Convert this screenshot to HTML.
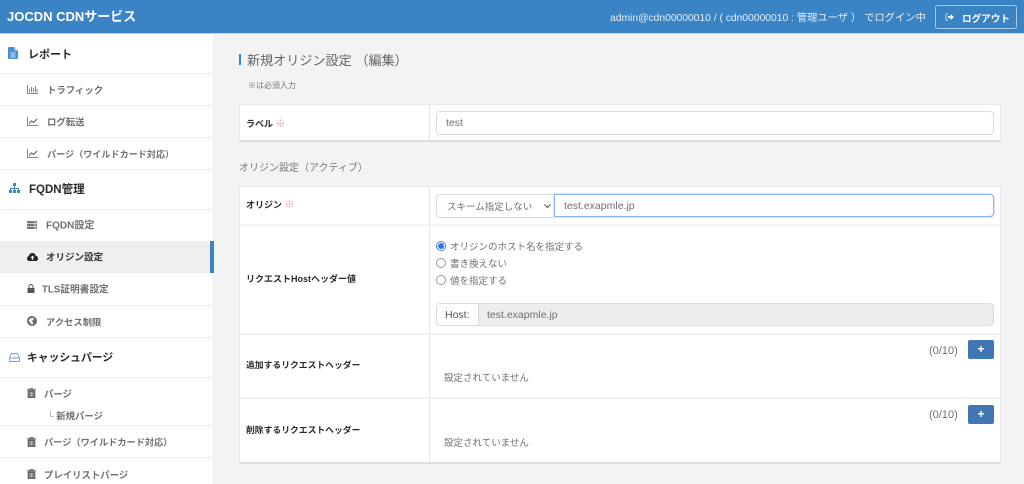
<!DOCTYPE html>
<html lang="ja"><head><meta charset="utf-8"><title>JOCDN</title>
<style>
*{box-sizing:border-box}
html,body{margin:0;padding:0}
body{width:1024px;height:484px;overflow:hidden;position:relative;background:#f3f3f3;font-family:"Liberation Sans","Noto Sans CJK JP",sans-serif;color:#555}
.a{position:absolute;white-space:nowrap}
.t{position:absolute;white-space:nowrap;line-height:14px;height:14px}
#hd{left:0;top:0;width:1024px;height:34px;background:#3a83c5;border-bottom:1px solid #c4d0da}
#sb{left:0;top:34px;width:214px;height:450px;background:#fff;border-right:1px solid #ececec}
.ln{position:absolute;left:0;width:214px;height:1px;background:#ebebeb}
.h{font-size:11px;font-weight:bold;color:#2a2a2a}
.s{font-size:9.4px;font-weight:bold;color:#707070;transform:translateY(-.5px)}
svg{position:absolute;display:block}
.card{position:absolute;left:239px;width:762px;background:#fff;border:1px solid #e8e8e8;border-bottom:2px solid #dcdcdc}
.vl{position:absolute;left:429px;width:1px;background:#e4e4e4}
.hl{position:absolute;left:240px;width:760px;height:2px;background:#f2f2f2}
.lb{font-size:9px;font-weight:bold;color:#2a2a2a}
.req{color:#ee8f99;font-weight:normal;font-size:10px}
.box{position:absolute;background:#fff;border:1px solid #dcdcdc;border-radius:4px;font-size:10.5px;color:#707070;line-height:22px;padding-left:9px;white-space:nowrap}
.tx{font-size:9.5px;color:#707070}
.radio{position:absolute;width:10px;height:10px;border-radius:50%;border:1px solid #999;background:#fff}
.btn{position:absolute;left:968px;width:26px;height:19px;background:#4177b3;border-radius:2px;color:#fff;font-weight:bold;font-size:12px;line-height:18px;text-align:center}
</style></head><body>
<div class="a" id="hd"></div>
<div class="t" style="left:7px;top:10px;font-size:13px;font-weight:bold;color:#fff">JOCDN CDNサービス</div>
<div class="t" style="left:610px;top:12px;font-size:10.3px;color:#e4eef8">admin@cdn00000010 / ( cdn00000010 : 管理ユーザ ） でログイン中</div>
<div class="a" style="left:935px;top:5px;width:82px;height:24px;border:1px solid #a9cbe8;border-radius:3px"></div>
<svg style="left:945px;top:13px" width="9" height="8" viewBox="0 0 9 8"><path d="M3 1H1v6h2" fill="none" stroke="#b8d4ec" stroke-width="1"/><path d="M3 3h2.500V1L9 4 5.500 7V5H3z" fill="#fff"/></svg>
<div class="t" style="left:962px;top:13px;font-size:9.6px;font-weight:bold;color:#fff">ログアウト</div>

<div class="a" id="sb"></div>
<div class="ln" style="top:73px"></div>
<div class="ln" style="top:105px"></div>
<div class="ln" style="top:137px"></div>
<div class="ln" style="top:169px"></div>
<div class="ln" style="top:209px"></div>
<div class="a" style="left:0;top:241px;width:214px;height:32px;background:#efefef"></div>
<div class="a" style="left:210px;top:241px;width:4px;height:32px;background:#3a83c5"></div>
<div class="ln" style="top:305px"></div>
<div class="ln" style="top:337px"></div>
<div class="ln" style="top:377px"></div>
<div class="ln" style="top:425px"></div>
<div class="ln" style="top:457px"></div>

<svg style="left:8px;top:47px" width="11" height="12" viewBox="0 0 11 12"><path d="M0 1q0-1 1-1h5l4 4v7q0 1-1 1H1q-1 0-1-1z" fill="#4a8fd0"/><path d="M6.500 0v3.500H10" fill="#bcd8f0"/><path d="M2.500 6h5M2.500 8h5M2.500 10h5" stroke="#fff" stroke-width=".8"/></svg>
<div class="t h" style="left:28px;top:48px">レポート</div>
<svg style="left:27px;top:85px" width="11" height="9" viewBox="0 0 11 9"><path d="M.5 0v8.500H11" fill="none" stroke="#888"/><path d="M2.500 4v3.500M4.500 2v5.500M6.500 3v4.500M8.500 1v6.500M10 4v3.500" stroke="#888" stroke-width="1"/></svg>
<div class="t s" style="left:47px;top:84px">トラフィック</div>
<svg style="left:27px;top:117px" width="11" height="9" viewBox="0 0 11 9"><path d="M.5 0v8.500H11" fill="none" stroke="#888"/><path d="M2 6.500L4.500 4 6.500 5.500 10 2" fill="none" stroke="#666" stroke-width="1.200"/></svg>
<div class="t s" style="left:47px;top:116px">ログ転送</div>
<svg style="left:27px;top:149px" width="11" height="9" viewBox="0 0 11 9"><path d="M.5 0v8.500H11" fill="none" stroke="#888"/><path d="M2 6.500L4.500 4 6.500 5.500 10 2" fill="none" stroke="#666" stroke-width="1.200"/></svg>
<div class="t s" style="left:47px;top:148px;font-size:9.1px">パージ（ワイルドカード対応）</div>

<svg style="left:9px;top:183px" width="11" height="10" viewBox="0 0 11 10"><path d="M4 0h3v3H4zM0 7h3v3H0zM4 7h3v3H4zM8 7h3v3H8z" fill="#3f86c8"/><path d="M5.500 3v2.500M1.500 7V5.500h8V7M5.500 5v2" fill="none" stroke="#3f86c8"/></svg>
<div class="t h" style="left:29px;top:183px;font-size:11.500px">FQDN管理</div>
<svg style="left:27px;top:221px" width="10" height="8" viewBox="0 0 10 8"><path d="M0 0h10v2.200H0zM0 2.900h10v2.200H0zM0 5.800h10V8H0z" fill="#777"/><path d="M7 1.100h2M7 4h2M7 6.900h2" stroke="#fff" stroke-width=".7"/></svg>
<div class="t s" style="left:46px;top:220px;font-size:10px">FQDN設定</div>
<svg style="left:27px;top:253px" width="11" height="8" viewBox="0 0 11 8"><path d="M2.500 8Q0 8 0 5.500 0 3.700 1.800 3.300 2.400 0 5.500 0 8 0 8.700 2.800 11 3.200 11 5.500 11 8 8.500 8z" fill="#222"/><path d="M5.500 2.500L3.500 4.800h1.300v2h1.400v-2h1.300z" fill="#fff"/></svg>
<div class="t s" style="left:46px;top:252px;color:#333;font-size:9.500px">オリジン設定</div>
<svg style="left:27px;top:284px" width="8" height="9" viewBox="0 0 8 9"><path d="M2 4V2.500a2 2 0 0 1 4 0V4" fill="none" stroke="#555" stroke-width="1"/><path d="M.5 4h7v5h-7z" fill="#555"/></svg>
<div class="t s" style="left:42px;top:284px;font-size:9.700px">TLS証明書設定</div>
<svg style="left:27px;top:316px" width="10" height="10" viewBox="0 0 10 10"><circle cx="5" cy="5" r="5" fill="#666"/><path d="M3 2.500L6 1.500 7 3 5 5 6.500 7 5 9 3 6.500 1.500 5z" fill="#eee"/></svg>
<div class="t s" style="left:46px;top:316px;font-size:9.300px">アクセス制限</div>

<svg style="left:9px;top:353px" width="11" height="9" viewBox="0 0 11 9"><path d="M2.500.5h6L10.500 5v2.500q0 1-1 1h-8q-1 0-1-1V5zM.5 5h10" fill="none" stroke="#6fa5d8" stroke-width="1"/></svg>
<div class="t h" style="left:27px;top:351px;font-size:10.800px">キャッシュパージ</div>
<svg style="left:27px;top:388px" width="9" height="10" viewBox="0 0 9 10"><path d="M0 1.500h9M3 1.500V.5h3v1M1 2.500h7V10H1z" fill="#666" stroke="#666" stroke-width=".7"/><path d="M3 4v4.500M4.500 4v4.500M6 4v4.500" stroke="#fff" stroke-width=".5"/></svg>
<div class="t s" style="left:44px;top:388px">パージ</div>
<div class="t s" style="left:47px;top:410px"><span style="font-weight:normal;color:#999">└</span> 新規パージ</div>
<svg style="left:27px;top:437px" width="9" height="10" viewBox="0 0 9 10"><path d="M0 1.500h9M3 1.500V.5h3v1M1 2.500h7V10H1z" fill="#666" stroke="#666" stroke-width=".7"/><path d="M3 4v4.500M4.500 4v4.500M6 4v4.500" stroke="#fff" stroke-width=".5"/></svg>
<div class="t s" style="left:44px;top:436px;font-size:9.200px">パージ（ワイルドカード対応）</div>
<svg style="left:27px;top:469px" width="9" height="10" viewBox="0 0 9 10"><path d="M0 1.500h9M3 1.500V.5h3v1M1 2.500h7V10H1z" fill="#666" stroke="#666" stroke-width=".7"/><path d="M3 4v4.500M4.500 4v4.500M6 4v4.500" stroke="#fff" stroke-width=".5"/></svg>
<div class="t s" style="left:44px;top:469px">プレイリストパージ</div>

<div class="a" style="left:239px;top:54px;width:2px;height:11px;background:#3a83c5"></div>
<div class="t" style="left:247px;top:54px;font-size:13.100px;color:#666">新規オリジン設定 （編集）</div>
<div class="t" style="left:248px;top:79px;font-size:8px;color:#777">※は必須入力</div>

<div class="card" style="top:104px;height:38px"></div>
<div class="vl" style="top:105px;height:35px"></div>
<div class="t lb" style="left:246px;top:117px">ラベル <span class="req">※</span></div>
<div class="box" style="left:436px;top:111px;width:558px;height:24px">test</div>

<div class="t" style="left:239px;top:162px;font-size:10px;color:#777">オリジン設定（アクティブ）</div>

<div class="card" style="top:186px;height:278px"></div>
<div class="vl" style="top:187px;height:275px"></div>
<div class="hl" style="top:224px"></div>
<div class="hl" style="top:333px"></div>
<div class="hl" style="top:397px"></div>

<div class="t lb" style="left:246px;top:198px">オリジン <span class="req">※</span></div>
<div class="box" style="left:436px;top:194px;width:119px;height:24px;border-radius:4px 0 0 4px;font-size:9.500px;padding-left:10px;line-height:25px">スキーム指定しない</div>
<svg style="left:544px;top:204px" width="7" height="5" viewBox="0 0 7 5"><path d="M.5.500L3.500 3.500 6.500.500" fill="none" stroke="#555" stroke-width="1.100"/></svg>
<div class="box" style="left:554px;top:194px;width:440px;height:23px;border:1px solid #86b7e8;box-shadow:0 0 1px 1px #cfe3f7;border-radius:0 4px 4px 0;font-size:10.500px;line-height:23px">test.exapmle.jp</div>

<div class="t lb" style="left:246px;top:272px">リクエストHostヘッダー値</div>
<div class="radio" style="left:436px;top:241px;border-color:#3f84e5"></div>
<div class="a" style="left:438px;top:243px;width:6px;height:6px;border-radius:50%;background:#2f78e4"></div>
<div class="t tx" style="left:450px;top:241px">オリジンのホスト名を指定する</div>
<div class="radio" style="left:436px;top:258px"></div>
<div class="t tx" style="left:450px;top:258px">書き換えない</div>
<div class="radio" style="left:436px;top:275px"></div>
<div class="t tx" style="left:450px;top:275px">値を指定する</div>
<div class="box" style="left:436px;top:303px;width:43px;height:23px;border-radius:4px 0 0 4px;font-size:10.500px;color:#555;padding-left:8px;line-height:23px">Host:</div>
<div class="box" style="left:478px;top:303px;width:516px;height:23px;background:#ededed;border-radius:0 4px 4px 0;line-height:23px;padding-left:8px">test.exapmle.jp</div>

<div class="t lb" style="left:246px;top:358px;font-size:8.800px">追加するリクエストヘッダー</div>
<div class="t" style="left:929px;top:344px;font-size:11px;color:#707070">(0/10)</div>
<div class="btn" style="top:340px">+</div>
<div class="t tx" style="left:444px;top:372px">設定されていません</div>

<div class="t lb" style="left:246px;top:423px;font-size:8.800px">削除するリクエストヘッダー</div>
<div class="t" style="left:929px;top:408px;font-size:11px;color:#707070">(0/10)</div>
<div class="btn" style="top:405px">+</div>
<div class="t tx" style="left:444px;top:437px">設定されていません</div>
</body></html>
